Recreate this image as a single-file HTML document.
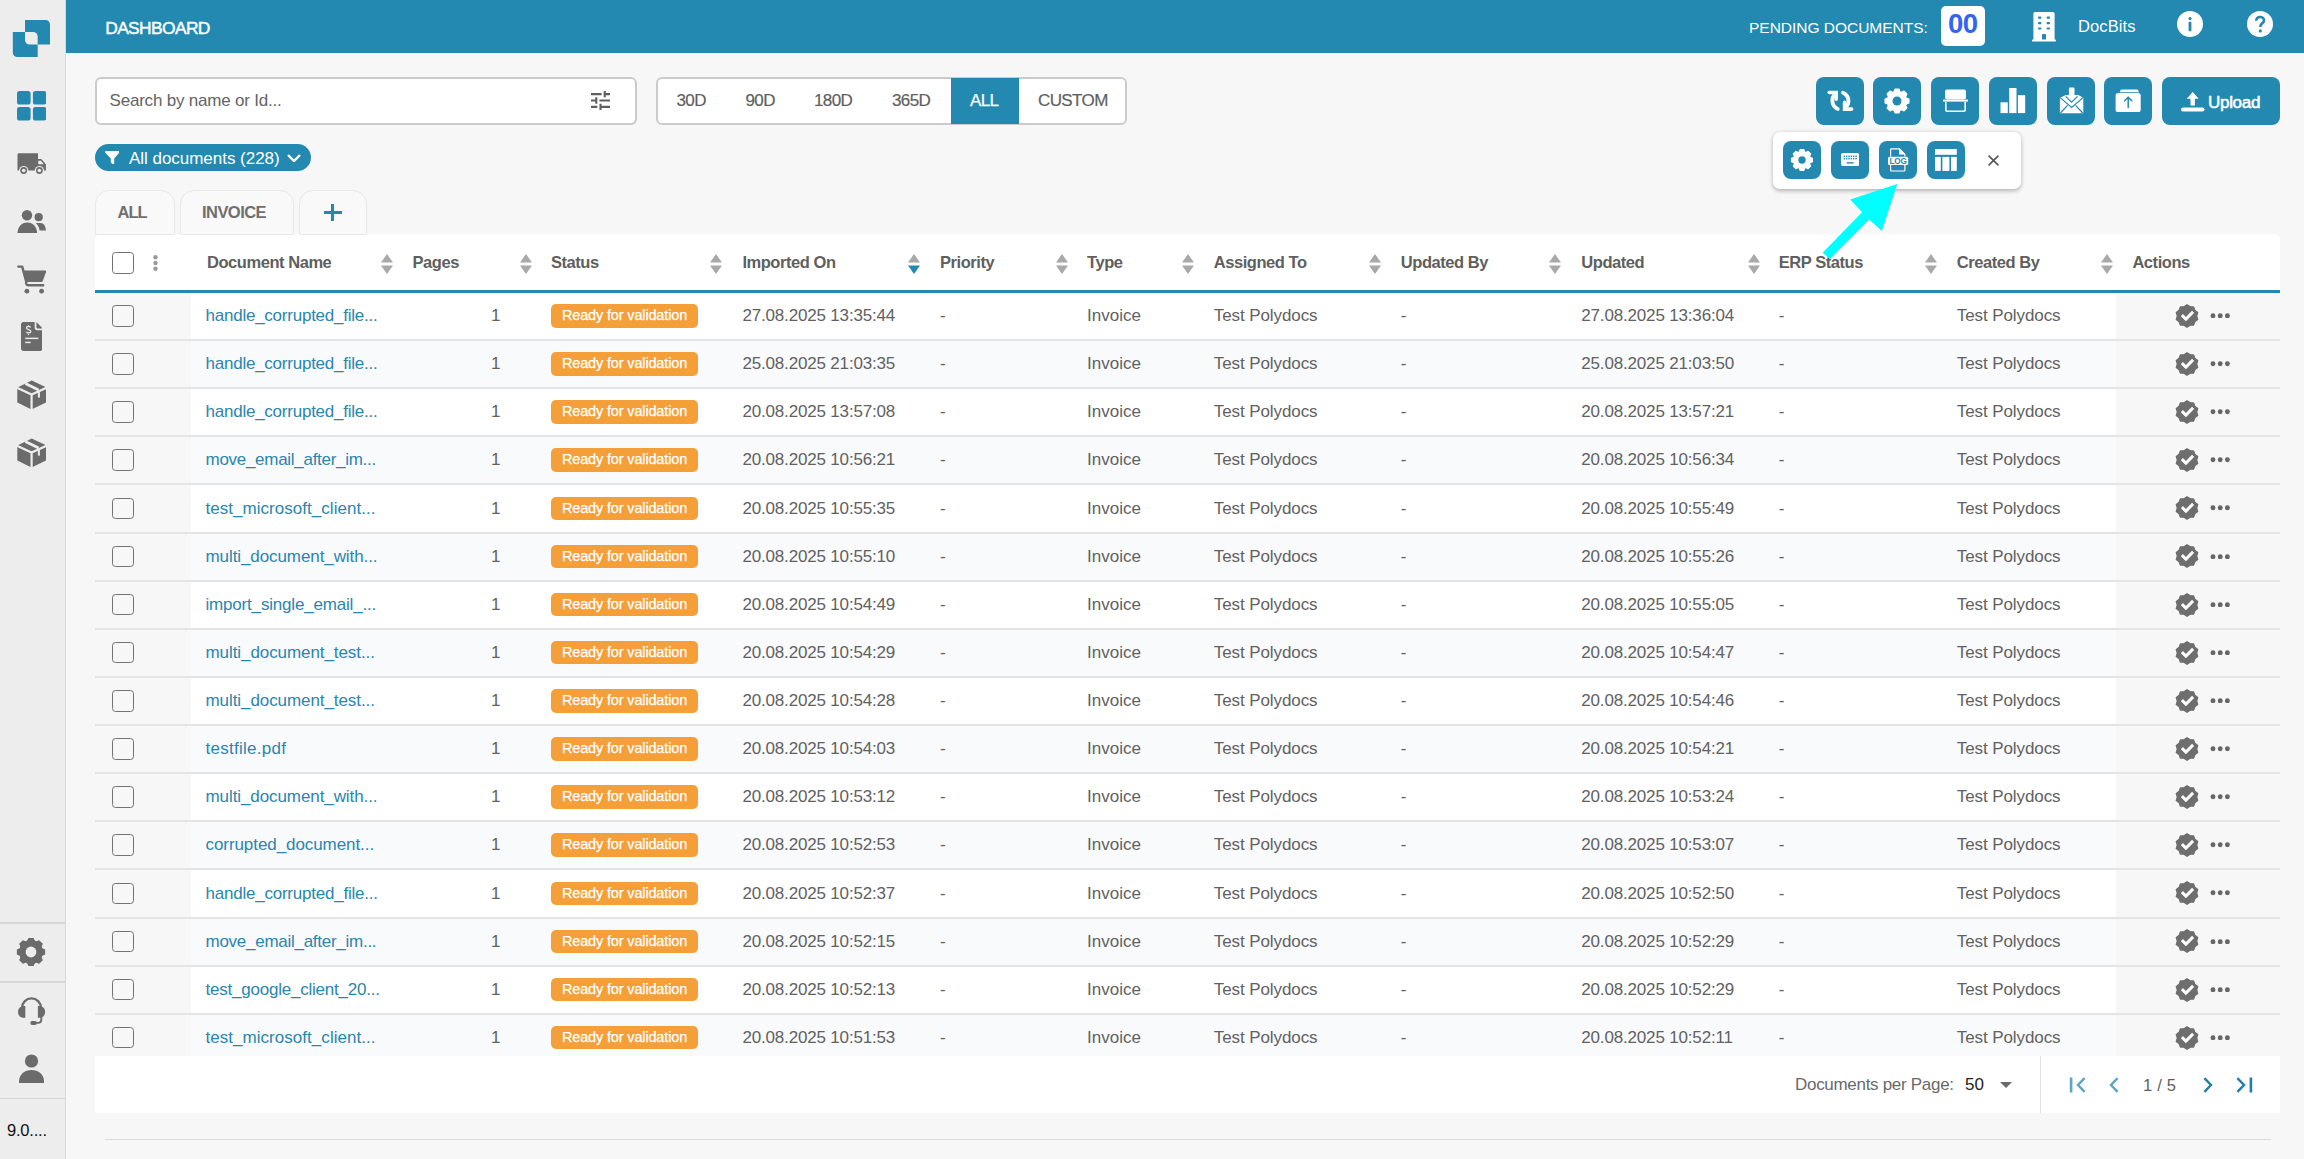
<!DOCTYPE html><html><head><meta charset="utf-8"><title>Dashboard</title><style>
*{box-sizing:border-box;margin:0;padding:0}
html,body{width:2304px;height:1159px;overflow:hidden}
body{position:relative;background:#f7f7f7;font-family:"Liberation Sans",sans-serif;color:#616161}
.a{position:absolute}
.t{position:absolute;white-space:nowrap;line-height:1}
#side{left:0;top:0;width:66px;height:1159px;background:#ededed;border-right:1px solid #d9d9d9}
#hdr{left:66px;top:0;width:2238px;height:52.5px;background:#2389b1}
.tb{position:absolute;top:77px;width:48px;height:48px;border-radius:8px;background:#2389b1}
.pb{position:absolute;top:141px;width:38px;height:38px;border-radius:8px;background:#2389b1}
.hd{font-size:16.5px;font-weight:700;color:#5f5f5f;letter-spacing:-0.45px}
.srt{position:absolute;width:12px;height:21px}
.row{position:absolute;left:95px;width:2185px;height:48.125px}
.dv{position:absolute;left:0;top:47px;width:2185px;height:2px;background:#e4e4e4;z-index:1}
.cell{position:absolute;white-space:nowrap;line-height:1;font-size:17px}
.lnk{color:#2a86ad;letter-spacing:-0.3px}
.badge{position:absolute;left:456px;width:147px;height:23.5px;border-radius:5px;background:#f59f38;color:#fff;font-size:14.5px;line-height:23.5px;text-align:center;letter-spacing:-0.15px;-webkit-text-stroke:0.25px #fff}
.cb{position:absolute;width:21.5px;height:21.5px;border:1.6px solid #727272;border-radius:3.5px;background:transparent}
</style></head><body>
<div id="side" class="a"></div>
<svg style="position:absolute;left:12px;top:20px;width:38px;height:37px" viewBox="12 20 38 37" fill="#2389b1" ><path fill="#2389b1" fill-rule="evenodd" d="M25 20h20.5a4.5 4.5 0 0 1 4.5 4.5V44.6H37.7V57H17.3a4.5 4.5 0 0 1-4.5-4.5V32H25z M25 32v8.1a4.5 4.5 0 0 0 4.5 4.5h8.2V36.5a4.5 4.5 0 0 0-4.5-4.5z"/></svg>
<svg style="position:absolute;left:16.7px;top:91px;width:29.5px;height:29.5px" viewBox="0 0 29.5 29.5" fill="#2389b1" ><rect x="0" y="0" width="13.6" height="13.6" rx="2.6"/><rect x="15.9" y="0" width="13.6" height="13.6" rx="2.6"/><rect x="0" y="15.9" width="13.6" height="13.6" rx="2.6"/><rect x="15.9" y="15.9" width="13.6" height="13.6" rx="2.6"/></svg>
<svg style="position:absolute;left:16.7px;top:153px;width:30px;height:23px" viewBox="0 0 30 23" fill="#6b6b6b" ><path d="M2 0.3H21V6H24.3L28.9 11.3V17.5H0.5V1.8C0.5 1 1.2 0.3 2 0.3z"/><path fill="#ededed" d="M21.3 7.7H24L26.7 11.2H21.3z"/><circle cx="6.7" cy="17.5" r="4.6" fill="#ededed"/><circle cx="6.7" cy="17.5" r="3.4"/><circle cx="6.7" cy="17.5" r="1.8" fill="#ededed"/><circle cx="22.4" cy="17.5" r="4.6" fill="#ededed"/><circle cx="22.4" cy="17.5" r="3.4"/><circle cx="22.4" cy="17.5" r="1.8" fill="#ededed"/></svg>
<svg style="position:absolute;left:16.7px;top:210px;width:30px;height:24px" viewBox="0 0 30 24" fill="#6b6b6b" ><circle cx="10" cy="5.3" r="5.2"/><path d="M0.5 23.1C0.5 17 4.5 12.4 10.3 12.4S20.1 17 20.1 23.1Z"/><circle cx="21.7" cy="7.2" r="4.1"/><path d="M18.8 13.1H23.5C26.8 13.1 28.9 16.5 28.9 20.6H22.6C22.2 17.5 20.8 14.8 18.8 13.1Z"/></svg>
<svg style="position:absolute;left:16.6px;top:265px;width:30px;height:30px" viewBox="0 0 30 30" fill="#6b6b6b" ><path fill="none" stroke="#6b6b6b" stroke-width="2.4" stroke-linecap="round" stroke-linejoin="round" d="M1.3 1.6H5.2L9.2 16.8C8.9 18.6 9.4 20.3 11.2 20.3H26.2"/><path d="M6.6 5.6H28.2C28.9 5.6 29.3 6.3 29.1 6.9L25.6 16.3C25.4 16.8 25 17.1 24.5 17.1H9.6Z"/><circle cx="9.9" cy="26.2" r="2.4"/><circle cx="24.6" cy="26.2" r="2.4"/></svg>
<svg style="position:absolute;left:20.8px;top:322.2px;width:21.6px;height:29px" viewBox="0 0 22.4 30" fill="#6b6b6b" ><path d="M2.6 0h11.6v6.2c0 1.2 1 2.2 2.2 2.2h6V27.4c0 1.4-1.2 2.6-2.6 2.6H2.6C1.2 30 0 28.8 0 27.4V2.6C0 1.2 1.2 0 2.6 0z"/><path d="M16 0l6.4 6.6H17a1 1 0 0 1-1-1z"/><path fill="none" stroke="#ededed" stroke-width="1.3" d="M7.8 3.4v1.2M7.8 12.3v1.2M10 5.6c-.4-.8-1.2-1.1-2.2-1.1-1.2 0-2.1.6-2.1 1.6 0 2.2 4.4 1.2 4.4 3.5 0 1-.9 1.7-2.2 1.7-1 0-1.9-.4-2.3-1.2"/><rect x="4.4" y="16.2" width="13.6" height="1.5" fill="#ededed"/><rect x="4.4" y="20.4" width="5.6" height="1.5" fill="#ededed"/></svg>
<svg style="position:absolute;left:16.6px;top:379.5px;width:29.4px;height:30px" viewBox="0 0 29.4 30" fill="#6b6b6b" ><path d="M14.7 0.4L29.2 7.4V22.4L14.5 29.6 0.3 22.4V7.4z"/><path fill="none" stroke="#ededed" stroke-width="2.2" d="M0 7.8L14.6 14.6L29.5 7.8M14.6 14.6V30.5"/><path fill="none" stroke="#ededed" stroke-width="2.8" d="M8.4 3.4L21.6 10.1"/><path fill="none" stroke="#ededed" stroke-width="2" d="M21.9 10.4V17.6"/></svg>
<svg style="position:absolute;left:16.6px;top:438px;width:29.4px;height:30px" viewBox="0 0 29.4 30" fill="#6b6b6b" ><path d="M14.7 0.4L29.2 7.4V22.4L14.5 29.6 0.3 22.4V7.4z"/><path fill="none" stroke="#ededed" stroke-width="2.2" d="M0 7.8L14.6 14.6L29.5 7.8M14.6 14.6V30.5"/><path fill="none" stroke="#ededed" stroke-width="2.8" d="M8.4 3.4L21.6 10.1"/><path fill="none" stroke="#ededed" stroke-width="2" d="M21.9 10.4V17.6"/></svg>
<div class="a" style="left:0;top:922px;width:65px;height:1.5px;background:#d6d6d6"></div>
<div class="a" style="left:0;top:981px;width:65px;height:1.5px;background:#d6d6d6"></div>
<div class="a" style="left:0;top:1097.5px;width:65px;height:1.5px;background:#d6d6d6"></div>
<svg style="position:absolute;left:15.3px;top:936px;width:32px;height:32px" viewBox="0 0 32 32"><circle cx="16.0" cy="16.0" r="11.700000000000001" fill="#6b6b6b"/><path d="M12.70 5.09 L13.80 2.48 L18.20 2.48 L19.30 5.09 L21.38 5.95 L24.01 4.88 L27.12 7.99 L26.05 10.62 L26.91 12.70 L29.52 13.80 L29.52 18.20 L26.91 19.30 L26.05 21.38 L27.12 24.01 L24.01 27.12 L21.38 26.05 L19.30 26.91 L18.20 29.52 L13.80 29.52 L12.70 26.91 L10.62 26.05 L7.99 27.12 L4.88 24.01 L5.95 21.38 L5.09 19.30 L2.48 18.20 L2.48 13.80 L5.09 12.70 L5.95 10.62 L4.88 7.99 L7.99 4.88 L10.62 5.95Z" fill="#6b6b6b" stroke="#6b6b6b" stroke-width="1.2" stroke-linejoin="round"/><circle cx="16.0" cy="16.0" r="5.4" fill="#ededed"/></svg>
<svg style="position:absolute;left:12px;top:990px;width:40px;height:40px" viewBox="0 0 40 40" fill="#6b6b6b" ><path fill="none" stroke="#6b6b6b" stroke-width="2.3" d="M10.1 20V17.8A9.4 9.4 0 0 1 28.9 17.8V20"/><path d="M13.3 16V27.8H11.6C8.4 27.8 6 25.2 6 21.9S8.4 16 11.6 16z"/><path d="M25.9 16V27.8H27.5C30.7 27.8 33.1 25.2 33.1 21.9S30.7 16 27.5 16z"/><path fill="none" stroke="#6b6b6b" stroke-width="1.9" d="M29.3 26V29.8C29.3 31.8 28.2 32.9 26.2 32.9H22"/><rect x="18.3" y="31" width="6.6" height="3.9" rx="1.9"/></svg>
<svg style="position:absolute;left:19px;top:1054px;width:25px;height:29px" viewBox="0 0 25 29" fill="#6b6b6b" ><circle cx="12.5" cy="7" r="6.6"/><path d="M0 27.5C0 20.3 5.6 16 12.5 16S25 20.3 25 27.5V29H0z"/></svg>
<div class="t" style="left:7px;top:1122px;font-size:16.5px;color:#111;letter-spacing:-0.2px">9.0....</div>
<div id="hdr" class="a"></div>
<div class="t" style="left:105.2px;top:20.1px;font-size:17.4px;font-weight:400;color:#fff;letter-spacing:-0.62px;-webkit-text-stroke:0.45px #fff">DASHBOARD</div>
<div class="t" style="left:1749px;top:20px;font-size:15.5px;color:#fff;letter-spacing:-0.02px">PENDING DOCUMENTS:</div>
<div class="a" style="left:1941px;top:6px;width:44px;height:40px;background:#fff;border-radius:5px"></div>
<div class="t" style="left:1948px;top:10.3px;font-size:27.5px;font-weight:700;color:#3163f5;letter-spacing:-0.6px">00</div>
<svg style="position:absolute;left:2032px;top:12px;width:24px;height:29.5px" viewBox="0 0 24 29.5" fill="#fff" ><path d="M3.2 0h17.6c1 0 1.8.8 1.8 1.8v25.6h.6c.5 0 .8.4.8.8v.5c0 .5-.4.8-.8.8H.8c-.5 0-.8-.3-.8-.8v-.5c0-.4.3-.8.8-.8h.6V1.8C1.4.8 2.2 0 3.2 0z"/><g fill="#2389b1"><rect x="6" y="4.6" width="3.4" height="2.2" rx=".8"/><rect x="14.6" y="4.6" width="3.4" height="2.2" rx=".8"/><rect x="6" y="10" width="3.4" height="2.2" rx=".8"/><rect x="14.6" y="10" width="3.4" height="2.2" rx=".8"/><rect x="6" y="15.4" width="3.4" height="2.2" rx=".8"/><rect x="14.6" y="15.4" width="3.4" height="2.2" rx=".8"/><path d="M10 27.4v-4.2c0-.7.5-1.2 1.2-1.2h1.6c.7 0 1.2.5 1.2 1.2v4.2z"/></g></svg>
<div class="t" style="left:2078px;top:18px;font-size:16.5px;color:#fff;letter-spacing:0.1px">DocBits</div>
<svg style="position:absolute;left:2177px;top:11.2px;width:26px;height:26px" viewBox="0 0 26 26" fill="#fff" ><circle cx="13" cy="13" r="13"/><g fill="#2389b1"><circle cx="13" cy="7.6" r="1.6"/><rect x="11.6" y="10.8" width="2.8" height="9.4" rx=".6"/></g></svg>
<svg style="position:absolute;left:2246.7px;top:11.2px;width:26px;height:26px" viewBox="0 0 26 26" fill="#fff" ><circle cx="13" cy="13" r="13"/><path fill="none" stroke="#2389b1" stroke-width="2.6" d="M9.2 9.8c0-2.3 1.7-3.8 3.9-3.8s3.9 1.5 3.9 3.6c0 2.8-3.6 2.8-3.6 5.7v.8"/><circle cx="13.3" cy="19.9" r="1.6" fill="#2389b1"/></svg>
<div class="a" style="left:95px;top:77px;width:541.5px;height:47.5px;background:#fff;border:2px solid #cbcbcb;border-radius:6px"></div>
<div class="t" style="left:109.5px;top:91.5px;font-size:17px;color:#646464;letter-spacing:-0.2px">Search by name or Id...</div>
<svg style="position:absolute;left:591px;top:91px;width:19px;height:19px" viewBox="3 3 18 18" fill="#5f5f5f" ><path d="M3 17v2h6v-2H3zM3 5v2h10V5H3zm10 16v-2h8v-2h-8v-2h-2v6h2zM7 9v2H3v2h4v2h2V9H7zm14 4v-2H11v2h10zm-6-4h2V7h4V5h-4V3h-2v6z"/></svg>
<div class="a" style="left:656px;top:77px;width:471px;height:47.5px;background:#fff;border:2px solid #cbcbcb;border-radius:6px;overflow:hidden"></div>
<div class="a" style="left:951px;top:78px;width:68px;height:46px;background:#2389b1"></div>
<div class="t" style="left:676.5px;top:92px;font-size:17px;color:#5f5f5f;letter-spacing:-0.6px;-webkit-text-stroke:0.2px #5f5f5f">30D</div>
<div class="t" style="left:745.5px;top:92px;font-size:17px;color:#5f5f5f;letter-spacing:-0.6px;-webkit-text-stroke:0.2px #5f5f5f">90D</div>
<div class="t" style="left:814px;top:92px;font-size:17px;color:#5f5f5f;letter-spacing:-0.6px;-webkit-text-stroke:0.2px #5f5f5f">180D</div>
<div class="t" style="left:892px;top:92px;font-size:17px;color:#5f5f5f;letter-spacing:-0.6px;-webkit-text-stroke:0.2px #5f5f5f">365D</div>
<div class="t" style="left:1038px;top:92px;font-size:17px;color:#5f5f5f;letter-spacing:-0.6px;-webkit-text-stroke:0.2px #5f5f5f">CUSTOM</div>
<div class="t" style="left:970px;top:92px;font-size:17px;color:#fff;letter-spacing:-0.6px;-webkit-text-stroke:0.25px #fff">ALL</div>
<div class="a" style="left:95px;top:144px;width:215.5px;height:27px;border-radius:14px;background:#2389b1"></div>
<svg style="position:absolute;left:104.6px;top:151.3px;width:14.6px;height:13.2px" viewBox="0 0 14.6 13.2" fill="#fff" ><path d="M.9 0h12.8c.8 0 1.2.9.7 1.5L9.2 7.4v4.9c0 .6-.7 1-1.2.7l-1.7-1.1c-.3-.2-.5-.5-.5-.8V7.4L.2 1.5C-.3.9.1 0 .9 0z"/></svg>
<div class="t" style="left:129px;top:149.5px;font-size:17px;color:#fff;letter-spacing:-0.03px">All documents (228)</div>
<svg style="position:absolute;left:287.4px;top:154px;width:14px;height:8.4px" viewBox="0 0 14 8.4" fill="#fff" ><path fill="none" stroke="#fff" stroke-width="2.4" d="M1 1l6 6 6-6"/></svg>
<div class="a" style="left:95px;top:190px;width:79.5px;height:45px;border-radius:14px 14px 0 0;background:#f9f9f9;border:1.5px solid #e8e8e8;z-index:3"></div>
<div class="a" style="left:179.5px;top:190px;width:114px;height:45px;border-radius:14px 14px 0 0;background:#f9f9f9;border:1.5px solid #e8e8e8;z-index:3"></div>
<div class="a" style="left:298.5px;top:190px;width:68.5px;height:45px;border-radius:14px 14px 0 0;background:#f9f9f9;border:1.5px solid #e8e8e8;z-index:3"></div>
<div class="t" style="left:117.5px;top:203.8px;font-size:16.5px;font-weight:700;color:#6f6f6f;letter-spacing:-1px;z-index:4">ALL</div>
<div class="t" style="left:202px;top:203.8px;font-size:16.5px;font-weight:700;color:#6f6f6f;letter-spacing:-0.55px;z-index:4">INVOICE</div>
<div class="a" style="left:323.5px;top:211px;width:18px;height:2.5px;background:#2389b1;z-index:4"></div>
<div class="a" style="left:331.3px;top:203.5px;width:2.5px;height:17.5px;background:#2389b1;z-index:4"></div>
<div class="tb" style="left:1815.5px"></div>
<div class="tb" style="left:1873px"></div>
<div class="tb" style="left:1931px"></div>
<div class="tb" style="left:1988.8px"></div>
<div class="tb" style="left:2046.6px"></div>
<div class="tb" style="left:2104.3px"></div>
<div class="tb" style="left:2162.3px;width:117.7px"></div>
<svg style="position:absolute;left:1815.5px;top:77px;width:48px;height:48px" viewBox="0 0 48 48"><path fill="none" stroke="#fff" stroke-width="3.8" stroke-linecap="round" d="M19.6 16.8A8.9 8.9 0 0 0 21.8 31.9"/><path fill="none" stroke="#fff" stroke-width="3.6" stroke-linecap="round" stroke-linejoin="miter" d="M13.2 15.5H20.2V22.3"/><g transform="rotate(180 24.4 23.8)"><path fill="none" stroke="#fff" stroke-width="3.8" stroke-linecap="round" d="M19.6 16.8A8.9 8.9 0 0 0 21.8 31.9"/><path fill="none" stroke="#fff" stroke-width="3.6" stroke-linecap="round" stroke-linejoin="miter" d="M13.2 15.5H20.2V22.3"/></g></svg>
<svg style="position:absolute;left:1883.3px;top:86.7px;width:28px;height:28px" viewBox="0 0 28 28"><circle cx="14.0" cy="14.0" r="10.0" fill="#fff"/><path d="M11.10 4.74 L12.00 2.07 L16.00 2.07 L16.90 4.74 L18.49 5.40 L21.02 4.15 L23.85 6.98 L22.60 9.51 L23.26 11.10 L25.93 12.00 L25.93 16.00 L23.26 16.90 L22.60 18.49 L23.85 21.02 L21.02 23.85 L18.49 22.60 L16.90 23.26 L16.00 25.93 L12.00 25.93 L11.10 23.26 L9.51 22.60 L6.98 23.85 L4.15 21.02 L5.40 18.49 L4.74 16.90 L2.07 16.00 L2.07 12.00 L4.74 11.10 L5.40 9.51 L4.15 6.98 L6.98 4.15 L9.51 5.40Z" fill="#fff" stroke="#fff" stroke-width="1.2" stroke-linejoin="round"/><circle cx="14.0" cy="14.0" r="4.5" fill="#2389b1"/></svg>
<svg style="position:absolute;left:1943px;top:89px;width:25px;height:24px" viewBox="0 0 25 24" fill="#fff" ><rect x="2" y="0.5" width="21" height="10" rx="2"/><rect x="0" y="10.6" width="25" height="2"/><path fill="none" stroke="#fff" stroke-width="1.6" d="M2.8 13v7.6c0 1.1.6 1.7 1.7 1.7h16c1.1 0 1.7-.6 1.7-1.7V13"/></svg>
<svg style="position:absolute;left:2000px;top:88px;width:26px;height:26px" viewBox="0 0 26 26" fill="#fff" ><rect x="0.5" y="14.3" width="7.3" height="10.8"/><rect x="9.2" y="0" width="7.3" height="25.1"/><rect x="17.9" y="7.2" width="7.3" height="17.9"/></svg>
<svg style="position:absolute;left:2046.6px;top:77px;width:48px;height:48px" viewBox="0 0 48 48"><path fill="#fff" d="M12.9 20.7L18.9 18.0H21.9V11.6c0-.6.5-1.1 1.1-1.1h3.4c.6 0 1.1.5 1.1 1.1V18.0H31.3L36.3 20.7V36.3H12.9z"/><path fill="none" stroke="#2389b1" stroke-width="1.2" d="M13.2 20.6L24.6 30.4L36 20.6M13.4 36L20.6 28.4M35.8 36L28.6 28.4M18.6 19.4L24.6 25.2L30.6 19.4"/></svg>
<svg style="position:absolute;left:2104.3px;top:77px;width:48px;height:48px" viewBox="0 0 48 48"><path fill="#fff" d="M15.6 15.3L16.6 13.1c.2-.4.6-.6 1-.6h15.4c.4 0 .8.2 1 .6l1 2.2z"/><rect x="11.6" y="15.9" width="25.1" height="19.1" rx="2.6" fill="#fff"/><path fill="none" stroke="#2389b1" stroke-width="1.5" stroke-linecap="round" d="M24.2 30.6V20.4M20.6 23.8l3.6-3.6 3.6 3.6"/></svg>
<svg style="position:absolute;left:2181px;top:92px;width:23.5px;height:20px" viewBox="0 0 23.5 20" fill="#fff" ><path d="M11.7 0l6 6.8h-3.8v6.6H9.5V6.8H5.7z"/><rect x="0" y="15.6" width="23.5" height="4" rx="2"/></svg>
<div class="t" style="left:2208px;top:94.3px;font-size:17px;font-weight:400;color:#fff;letter-spacing:-0.3px;-webkit-text-stroke:0.55px #fff">Upload</div>
<div class="a" style="left:1773px;top:131.5px;width:248px;height:57px;background:#fff;border-radius:7px;box-shadow:0 1.5px 4px rgba(0,0,0,0.28)"></div>
<div class="pb" style="left:1783px"></div>
<div class="pb" style="left:1831.2px"></div>
<div class="pb" style="left:1879.1px"></div>
<div class="pb" style="left:1927.2px"></div>
<svg style="position:absolute;left:1789.9px;top:147.9px;width:24px;height:24px" viewBox="0 0 24 24"><circle cx="12.0" cy="12.0" r="8.8" fill="#fff"/><path d="M9.40 3.91 L10.20 1.55 L13.80 1.55 L14.60 3.91 L15.88 4.44 L18.11 3.34 L20.66 5.89 L19.56 8.12 L20.09 9.40 L22.45 10.20 L22.45 13.80 L20.09 14.60 L19.56 15.88 L20.66 18.11 L18.11 20.66 L15.88 19.56 L14.60 20.09 L13.80 22.45 L10.20 22.45 L9.40 20.09 L8.12 19.56 L5.89 20.66 L3.34 18.11 L4.44 15.88 L3.91 14.60 L1.55 13.80 L1.55 10.20 L3.91 9.40 L4.44 8.12 L3.34 5.89 L5.89 3.34 L8.12 4.44Z" fill="#fff" stroke="#fff" stroke-width="1.2" stroke-linejoin="round"/><circle cx="12.0" cy="12.0" r="3.7" fill="#2389b1"/></svg>
<svg style="position:absolute;left:1841px;top:153.3px;width:18.2px;height:13.1px" viewBox="0 0 18.2 13.1" fill="#fff" ><rect x="0" y="0" width="18.2" height="13.1" rx="2"/><g fill="#2389b1"><rect x="2.60" y="2.60" width="1.4" height="1.4"/><rect x="2.60" y="5.00" width="1.4" height="1.4"/><rect x="4.95" y="2.60" width="1.4" height="1.4"/><rect x="4.95" y="5.00" width="1.4" height="1.4"/><rect x="7.30" y="2.60" width="1.4" height="1.4"/><rect x="7.30" y="5.00" width="1.4" height="1.4"/><rect x="9.65" y="2.60" width="1.4" height="1.4"/><rect x="9.65" y="5.00" width="1.4" height="1.4"/><rect x="12.00" y="2.60" width="1.4" height="1.4"/><rect x="12.00" y="5.00" width="1.4" height="1.4"/><rect x="14.35" y="2.60" width="1.4" height="1.4"/><rect x="14.35" y="5.00" width="1.4" height="1.4"/><rect x="5.6" y="9.2" width="7" height="1.4"/></g></svg>
<svg style="position:absolute;left:1879.1px;top:141.2px;width:38px;height:38px" viewBox="0 0 38 38"><path fill="none" stroke="#fff" stroke-width="1.2" d="M11.6 15.6V8.6c0-.4.3-.7.7-.7h8.2l5.4 5.6v2.1M11.6 24V29.3c0 .4.3.7.7.7h12.9c.4 0 .7-.3.7-.7V24"/><path fill="#fff" d="M20.2 7.9V13.6h5.9z"/><rect x="9" y="15.8" width="20.2" height="8.2" rx="1.6" fill="#fff"/><text x="19.1" y="22.9" text-anchor="middle" font-family="Liberation Sans" font-weight="700" font-size="8.2" fill="#2389b1" letter-spacing="-0.2">LOG</text></svg>
<svg style="position:absolute;left:1935.4px;top:149.1px;width:21.8px;height:21.9px" viewBox="0 0 21.8 21.9" fill="#fff" ><rect x="0" y="0" width="21.8" height="5.8"/><rect x="0" y="7.9" width="5.8" height="14"/><rect x="7.4" y="7.9" width="7" height="14"/><rect x="16" y="7.9" width="5.8" height="14"/></svg>
<svg style="position:absolute;left:1988px;top:154.5px;width:11px;height:11px" viewBox="0 0 11 11" fill="#fff" ><path fill="none" stroke="#555" stroke-width="1.5" d="M.6.6l9.8 9.8M10.4.6L.6 10.4"/></svg>
<div class="a" style="left:95px;top:234px;width:2185px;height:821.5px;background:#fff;border-radius:6px 6px 0 0;overflow:hidden" id="tbl">
<div class="a" style="left:0;top:56px;width:2185px;height:2.6px;background:#2389b1;z-index:2"></div>
<div class="cb" style="left:17px;top:18px"></div>
<svg style="position:absolute;left:57.5px;top:20.5px;width:5px;height:16px" viewBox="0 0 5 16" fill="#9a9a9a"><circle cx="2.5" cy="2.3" r="2.2"/><circle cx="2.5" cy="8" r="2.2"/><circle cx="2.5" cy="13.7" r="2.2"/></svg>
<div class="t hd" style="left:112.0px;top:19.5px">Document Name</div>
<div class="t hd" style="left:317.5px;top:19.5px">Pages</div>
<div class="t hd" style="left:456.0px;top:19.5px">Status</div>
<div class="t hd" style="left:647.4px;top:19.5px">Imported On</div>
<div class="t hd" style="left:845.0px;top:19.5px">Priority</div>
<div class="t hd" style="left:992.0px;top:19.5px">Type</div>
<div class="t hd" style="left:1118.8px;top:19.5px">Assigned To</div>
<div class="t hd" style="left:1305.8px;top:19.5px">Updated By</div>
<div class="t hd" style="left:1486.3px;top:19.5px">Updated</div>
<div class="t hd" style="left:1683.8px;top:19.5px">ERP Status</div>
<div class="t hd" style="left:1861.8px;top:19.5px">Created By</div>
<div class="t hd" style="left:2037.4px;top:19.5px">Actions</div>
<svg class="srt" style="left:286.0px;top:20px" viewBox="0 0 12 21"><path d="M6 0L12 8.4H0z" fill="#a8a8a8"/><path d="M0 11.5H12L6 20z" fill="#a8a8a8"/></svg>
<svg class="srt" style="left:425.0px;top:20px" viewBox="0 0 12 21"><path d="M6 0L12 8.4H0z" fill="#a8a8a8"/><path d="M0 11.5H12L6 20z" fill="#a8a8a8"/></svg>
<svg class="srt" style="left:615.0px;top:20px" viewBox="0 0 12 21"><path d="M6 0L12 8.4H0z" fill="#a8a8a8"/><path d="M0 11.5H12L6 20z" fill="#a8a8a8"/></svg>
<svg class="srt" style="left:813.0px;top:20px" viewBox="0 0 12 21"><path d="M6 0L12 8.4H0z" fill="#a8a8a8"/><path d="M0 11.5H12L6 20z" fill="#2389b1"/></svg>
<svg class="srt" style="left:961.0px;top:20px" viewBox="0 0 12 21"><path d="M6 0L12 8.4H0z" fill="#a8a8a8"/><path d="M0 11.5H12L6 20z" fill="#a8a8a8"/></svg>
<svg class="srt" style="left:1087.0px;top:20px" viewBox="0 0 12 21"><path d="M6 0L12 8.4H0z" fill="#a8a8a8"/><path d="M0 11.5H12L6 20z" fill="#a8a8a8"/></svg>
<svg class="srt" style="left:1274.0px;top:20px" viewBox="0 0 12 21"><path d="M6 0L12 8.4H0z" fill="#a8a8a8"/><path d="M0 11.5H12L6 20z" fill="#a8a8a8"/></svg>
<svg class="srt" style="left:1454.0px;top:20px" viewBox="0 0 12 21"><path d="M6 0L12 8.4H0z" fill="#a8a8a8"/><path d="M0 11.5H12L6 20z" fill="#a8a8a8"/></svg>
<svg class="srt" style="left:1652.5px;top:20px" viewBox="0 0 12 21"><path d="M6 0L12 8.4H0z" fill="#a8a8a8"/><path d="M0 11.5H12L6 20z" fill="#a8a8a8"/></svg>
<svg class="srt" style="left:1830.0px;top:20px" viewBox="0 0 12 21"><path d="M6 0L12 8.4H0z" fill="#a8a8a8"/><path d="M0 11.5H12L6 20z" fill="#a8a8a8"/></svg>
<svg class="srt" style="left:2006.0px;top:20px" viewBox="0 0 12 21"><path d="M6 0L12 8.4H0z" fill="#a8a8a8"/><path d="M0 11.5H12L6 20z" fill="#a8a8a8"/></svg>
<div class="row" style="left:0;top:58.100px;background:#ffffff">
<div class="a" style="left:0;top:0;width:95.5px;height:48.125px;background:#f7f7f7"></div>
<div class="a" style="left:2021px;top:0;width:164px;height:48.125px;background:#f7f7f7"></div>
<div class="dv"></div>
<div class="cb" style="left:17px;top:13px"></div>
<div class="cell lnk" style="left:110.5px;top:15px;letter-spacing:-0.235px">handle_corrupted_file...</div>
<div class="cell" style="left:396px;top:15px">1</div>
<div class="badge" style="top:12px">Ready for validation</div>
<div class="cell" style="left:647.4px;top:15px;letter-spacing:-0.17px">27.08.2025 13:35:44</div>
<div class="cell" style="left:845px;top:15px">-</div>
<div class="cell" style="left:992px;top:15px">Invoice</div>
<div class="cell" style="left:1118.8px;top:15px;letter-spacing:-0.09px">Test Polydocs</div>
<div class="cell" style="left:1305.8px;top:15px">-</div>
<div class="cell" style="left:1486.3px;top:15px;letter-spacing:-0.17px">27.08.2025 13:36:04</div>
<div class="cell" style="left:1683.8px;top:15px">-</div>
<div class="cell" style="left:1861.8px;top:15px;letter-spacing:-0.09px">Test Polydocs</div>
<svg style="position:absolute;left:2078.1px;top:9.70px;width:28px;height:28px" viewBox="0 0 28 28"><path d="M14.00 2.80 L16.97 4.87 L20.58 4.94 L21.77 8.36 L24.65 10.54 L23.60 14.00 L24.65 17.46 L21.77 19.64 L20.58 23.06 L16.97 23.13 L14.00 25.20 L11.03 23.13 L7.42 23.06 L6.23 19.64 L3.35 17.46 L4.40 14.00 L3.35 10.54 L6.23 8.36 L7.42 4.94 L11.03 4.87Z" fill="#6e6e6e" stroke="#6e6e6e" stroke-width="1.4" stroke-linejoin="round"/><path d="M8.9 13.1L12.9 17.1L20.1 9.9" fill="none" stroke="#fff" stroke-width="2.9"/></svg>
<svg style="position:absolute;left:2114.5px;top:20.8px;width:20px;height:5.5px" viewBox="0 0 20 5.5" fill="#666"><circle cx="3" cy="2.75" r="2.45"/><circle cx="10.2" cy="2.75" r="2.45"/><circle cx="17.4" cy="2.75" r="2.45"/></svg>
</div>
<div class="row" style="left:0;top:106.225px;background:#f9fafc">
<div class="a" style="left:0;top:0;width:95.5px;height:48.125px;background:#f7f7f7"></div>
<div class="a" style="left:2021px;top:0;width:164px;height:48.125px;background:#f7f7f7"></div>
<div class="dv"></div>
<div class="cb" style="left:17px;top:13px"></div>
<div class="cell lnk" style="left:110.5px;top:15px;letter-spacing:-0.235px">handle_corrupted_file...</div>
<div class="cell" style="left:396px;top:15px">1</div>
<div class="badge" style="top:12px">Ready for validation</div>
<div class="cell" style="left:647.4px;top:15px;letter-spacing:-0.17px">25.08.2025 21:03:35</div>
<div class="cell" style="left:845px;top:15px">-</div>
<div class="cell" style="left:992px;top:15px">Invoice</div>
<div class="cell" style="left:1118.8px;top:15px;letter-spacing:-0.09px">Test Polydocs</div>
<div class="cell" style="left:1305.8px;top:15px">-</div>
<div class="cell" style="left:1486.3px;top:15px;letter-spacing:-0.17px">25.08.2025 21:03:50</div>
<div class="cell" style="left:1683.8px;top:15px">-</div>
<div class="cell" style="left:1861.8px;top:15px;letter-spacing:-0.09px">Test Polydocs</div>
<svg style="position:absolute;left:2078.1px;top:9.70px;width:28px;height:28px" viewBox="0 0 28 28"><path d="M14.00 2.80 L16.97 4.87 L20.58 4.94 L21.77 8.36 L24.65 10.54 L23.60 14.00 L24.65 17.46 L21.77 19.64 L20.58 23.06 L16.97 23.13 L14.00 25.20 L11.03 23.13 L7.42 23.06 L6.23 19.64 L3.35 17.46 L4.40 14.00 L3.35 10.54 L6.23 8.36 L7.42 4.94 L11.03 4.87Z" fill="#6e6e6e" stroke="#6e6e6e" stroke-width="1.4" stroke-linejoin="round"/><path d="M8.9 13.1L12.9 17.1L20.1 9.9" fill="none" stroke="#fff" stroke-width="2.9"/></svg>
<svg style="position:absolute;left:2114.5px;top:20.8px;width:20px;height:5.5px" viewBox="0 0 20 5.5" fill="#666"><circle cx="3" cy="2.75" r="2.45"/><circle cx="10.2" cy="2.75" r="2.45"/><circle cx="17.4" cy="2.75" r="2.45"/></svg>
</div>
<div class="row" style="left:0;top:154.350px;background:#ffffff">
<div class="a" style="left:0;top:0;width:95.5px;height:48.125px;background:#f7f7f7"></div>
<div class="a" style="left:2021px;top:0;width:164px;height:48.125px;background:#f7f7f7"></div>
<div class="dv"></div>
<div class="cb" style="left:17px;top:13px"></div>
<div class="cell lnk" style="left:110.5px;top:15px;letter-spacing:-0.235px">handle_corrupted_file...</div>
<div class="cell" style="left:396px;top:15px">1</div>
<div class="badge" style="top:12px">Ready for validation</div>
<div class="cell" style="left:647.4px;top:15px;letter-spacing:-0.17px">20.08.2025 13:57:08</div>
<div class="cell" style="left:845px;top:15px">-</div>
<div class="cell" style="left:992px;top:15px">Invoice</div>
<div class="cell" style="left:1118.8px;top:15px;letter-spacing:-0.09px">Test Polydocs</div>
<div class="cell" style="left:1305.8px;top:15px">-</div>
<div class="cell" style="left:1486.3px;top:15px;letter-spacing:-0.17px">20.08.2025 13:57:21</div>
<div class="cell" style="left:1683.8px;top:15px">-</div>
<div class="cell" style="left:1861.8px;top:15px;letter-spacing:-0.09px">Test Polydocs</div>
<svg style="position:absolute;left:2078.1px;top:9.70px;width:28px;height:28px" viewBox="0 0 28 28"><path d="M14.00 2.80 L16.97 4.87 L20.58 4.94 L21.77 8.36 L24.65 10.54 L23.60 14.00 L24.65 17.46 L21.77 19.64 L20.58 23.06 L16.97 23.13 L14.00 25.20 L11.03 23.13 L7.42 23.06 L6.23 19.64 L3.35 17.46 L4.40 14.00 L3.35 10.54 L6.23 8.36 L7.42 4.94 L11.03 4.87Z" fill="#6e6e6e" stroke="#6e6e6e" stroke-width="1.4" stroke-linejoin="round"/><path d="M8.9 13.1L12.9 17.1L20.1 9.9" fill="none" stroke="#fff" stroke-width="2.9"/></svg>
<svg style="position:absolute;left:2114.5px;top:20.8px;width:20px;height:5.5px" viewBox="0 0 20 5.5" fill="#666"><circle cx="3" cy="2.75" r="2.45"/><circle cx="10.2" cy="2.75" r="2.45"/><circle cx="17.4" cy="2.75" r="2.45"/></svg>
</div>
<div class="row" style="left:0;top:202.475px;background:#f9fafc">
<div class="a" style="left:0;top:0;width:95.5px;height:48.125px;background:#f7f7f7"></div>
<div class="a" style="left:2021px;top:0;width:164px;height:48.125px;background:#f7f7f7"></div>
<div class="dv"></div>
<div class="cb" style="left:17px;top:13px"></div>
<div class="cell lnk" style="left:110.5px;top:15px;letter-spacing:-0.286px">move_email_after_im...</div>
<div class="cell" style="left:396px;top:15px">1</div>
<div class="badge" style="top:12px">Ready for validation</div>
<div class="cell" style="left:647.4px;top:15px;letter-spacing:-0.17px">20.08.2025 10:56:21</div>
<div class="cell" style="left:845px;top:15px">-</div>
<div class="cell" style="left:992px;top:15px">Invoice</div>
<div class="cell" style="left:1118.8px;top:15px;letter-spacing:-0.09px">Test Polydocs</div>
<div class="cell" style="left:1305.8px;top:15px">-</div>
<div class="cell" style="left:1486.3px;top:15px;letter-spacing:-0.17px">20.08.2025 10:56:34</div>
<div class="cell" style="left:1683.8px;top:15px">-</div>
<div class="cell" style="left:1861.8px;top:15px;letter-spacing:-0.09px">Test Polydocs</div>
<svg style="position:absolute;left:2078.1px;top:9.70px;width:28px;height:28px" viewBox="0 0 28 28"><path d="M14.00 2.80 L16.97 4.87 L20.58 4.94 L21.77 8.36 L24.65 10.54 L23.60 14.00 L24.65 17.46 L21.77 19.64 L20.58 23.06 L16.97 23.13 L14.00 25.20 L11.03 23.13 L7.42 23.06 L6.23 19.64 L3.35 17.46 L4.40 14.00 L3.35 10.54 L6.23 8.36 L7.42 4.94 L11.03 4.87Z" fill="#6e6e6e" stroke="#6e6e6e" stroke-width="1.4" stroke-linejoin="round"/><path d="M8.9 13.1L12.9 17.1L20.1 9.9" fill="none" stroke="#fff" stroke-width="2.9"/></svg>
<svg style="position:absolute;left:2114.5px;top:20.8px;width:20px;height:5.5px" viewBox="0 0 20 5.5" fill="#666"><circle cx="3" cy="2.75" r="2.45"/><circle cx="10.2" cy="2.75" r="2.45"/><circle cx="17.4" cy="2.75" r="2.45"/></svg>
</div>
<div class="row" style="left:0;top:250.600px;background:#ffffff">
<div class="a" style="left:0;top:0;width:95.5px;height:48.125px;background:#f7f7f7"></div>
<div class="a" style="left:2021px;top:0;width:164px;height:48.125px;background:#f7f7f7"></div>
<div class="dv"></div>
<div class="cb" style="left:17px;top:13px"></div>
<div class="cell lnk" style="left:110.5px;top:15px;letter-spacing:0.035px">test_microsoft_client...</div>
<div class="cell" style="left:396px;top:15px">1</div>
<div class="badge" style="top:12px">Ready for validation</div>
<div class="cell" style="left:647.4px;top:15px;letter-spacing:-0.17px">20.08.2025 10:55:35</div>
<div class="cell" style="left:845px;top:15px">-</div>
<div class="cell" style="left:992px;top:15px">Invoice</div>
<div class="cell" style="left:1118.8px;top:15px;letter-spacing:-0.09px">Test Polydocs</div>
<div class="cell" style="left:1305.8px;top:15px">-</div>
<div class="cell" style="left:1486.3px;top:15px;letter-spacing:-0.17px">20.08.2025 10:55:49</div>
<div class="cell" style="left:1683.8px;top:15px">-</div>
<div class="cell" style="left:1861.8px;top:15px;letter-spacing:-0.09px">Test Polydocs</div>
<svg style="position:absolute;left:2078.1px;top:9.70px;width:28px;height:28px" viewBox="0 0 28 28"><path d="M14.00 2.80 L16.97 4.87 L20.58 4.94 L21.77 8.36 L24.65 10.54 L23.60 14.00 L24.65 17.46 L21.77 19.64 L20.58 23.06 L16.97 23.13 L14.00 25.20 L11.03 23.13 L7.42 23.06 L6.23 19.64 L3.35 17.46 L4.40 14.00 L3.35 10.54 L6.23 8.36 L7.42 4.94 L11.03 4.87Z" fill="#6e6e6e" stroke="#6e6e6e" stroke-width="1.4" stroke-linejoin="round"/><path d="M8.9 13.1L12.9 17.1L20.1 9.9" fill="none" stroke="#fff" stroke-width="2.9"/></svg>
<svg style="position:absolute;left:2114.5px;top:20.8px;width:20px;height:5.5px" viewBox="0 0 20 5.5" fill="#666"><circle cx="3" cy="2.75" r="2.45"/><circle cx="10.2" cy="2.75" r="2.45"/><circle cx="17.4" cy="2.75" r="2.45"/></svg>
</div>
<div class="row" style="left:0;top:298.725px;background:#f9fafc">
<div class="a" style="left:0;top:0;width:95.5px;height:48.125px;background:#f7f7f7"></div>
<div class="a" style="left:2021px;top:0;width:164px;height:48.125px;background:#f7f7f7"></div>
<div class="dv"></div>
<div class="cb" style="left:17px;top:13px"></div>
<div class="cell lnk" style="left:110.5px;top:15px;letter-spacing:-0.086px">multi_document_with...</div>
<div class="cell" style="left:396px;top:15px">1</div>
<div class="badge" style="top:12px">Ready for validation</div>
<div class="cell" style="left:647.4px;top:15px;letter-spacing:-0.17px">20.08.2025 10:55:10</div>
<div class="cell" style="left:845px;top:15px">-</div>
<div class="cell" style="left:992px;top:15px">Invoice</div>
<div class="cell" style="left:1118.8px;top:15px;letter-spacing:-0.09px">Test Polydocs</div>
<div class="cell" style="left:1305.8px;top:15px">-</div>
<div class="cell" style="left:1486.3px;top:15px;letter-spacing:-0.17px">20.08.2025 10:55:26</div>
<div class="cell" style="left:1683.8px;top:15px">-</div>
<div class="cell" style="left:1861.8px;top:15px;letter-spacing:-0.09px">Test Polydocs</div>
<svg style="position:absolute;left:2078.1px;top:9.70px;width:28px;height:28px" viewBox="0 0 28 28"><path d="M14.00 2.80 L16.97 4.87 L20.58 4.94 L21.77 8.36 L24.65 10.54 L23.60 14.00 L24.65 17.46 L21.77 19.64 L20.58 23.06 L16.97 23.13 L14.00 25.20 L11.03 23.13 L7.42 23.06 L6.23 19.64 L3.35 17.46 L4.40 14.00 L3.35 10.54 L6.23 8.36 L7.42 4.94 L11.03 4.87Z" fill="#6e6e6e" stroke="#6e6e6e" stroke-width="1.4" stroke-linejoin="round"/><path d="M8.9 13.1L12.9 17.1L20.1 9.9" fill="none" stroke="#fff" stroke-width="2.9"/></svg>
<svg style="position:absolute;left:2114.5px;top:20.8px;width:20px;height:5.5px" viewBox="0 0 20 5.5" fill="#666"><circle cx="3" cy="2.75" r="2.45"/><circle cx="10.2" cy="2.75" r="2.45"/><circle cx="17.4" cy="2.75" r="2.45"/></svg>
</div>
<div class="row" style="left:0;top:346.850px;background:#ffffff">
<div class="a" style="left:0;top:0;width:95.5px;height:48.125px;background:#f7f7f7"></div>
<div class="a" style="left:2021px;top:0;width:164px;height:48.125px;background:#f7f7f7"></div>
<div class="dv"></div>
<div class="cb" style="left:17px;top:13px"></div>
<div class="cell lnk" style="left:110.5px;top:15px;letter-spacing:-0.186px">import_single_email_...</div>
<div class="cell" style="left:396px;top:15px">1</div>
<div class="badge" style="top:12px">Ready for validation</div>
<div class="cell" style="left:647.4px;top:15px;letter-spacing:-0.17px">20.08.2025 10:54:49</div>
<div class="cell" style="left:845px;top:15px">-</div>
<div class="cell" style="left:992px;top:15px">Invoice</div>
<div class="cell" style="left:1118.8px;top:15px;letter-spacing:-0.09px">Test Polydocs</div>
<div class="cell" style="left:1305.8px;top:15px">-</div>
<div class="cell" style="left:1486.3px;top:15px;letter-spacing:-0.17px">20.08.2025 10:55:05</div>
<div class="cell" style="left:1683.8px;top:15px">-</div>
<div class="cell" style="left:1861.8px;top:15px;letter-spacing:-0.09px">Test Polydocs</div>
<svg style="position:absolute;left:2078.1px;top:9.70px;width:28px;height:28px" viewBox="0 0 28 28"><path d="M14.00 2.80 L16.97 4.87 L20.58 4.94 L21.77 8.36 L24.65 10.54 L23.60 14.00 L24.65 17.46 L21.77 19.64 L20.58 23.06 L16.97 23.13 L14.00 25.20 L11.03 23.13 L7.42 23.06 L6.23 19.64 L3.35 17.46 L4.40 14.00 L3.35 10.54 L6.23 8.36 L7.42 4.94 L11.03 4.87Z" fill="#6e6e6e" stroke="#6e6e6e" stroke-width="1.4" stroke-linejoin="round"/><path d="M8.9 13.1L12.9 17.1L20.1 9.9" fill="none" stroke="#fff" stroke-width="2.9"/></svg>
<svg style="position:absolute;left:2114.5px;top:20.8px;width:20px;height:5.5px" viewBox="0 0 20 5.5" fill="#666"><circle cx="3" cy="2.75" r="2.45"/><circle cx="10.2" cy="2.75" r="2.45"/><circle cx="17.4" cy="2.75" r="2.45"/></svg>
</div>
<div class="row" style="left:0;top:394.975px;background:#f9fafc">
<div class="a" style="left:0;top:0;width:95.5px;height:48.125px;background:#f7f7f7"></div>
<div class="a" style="left:2021px;top:0;width:164px;height:48.125px;background:#f7f7f7"></div>
<div class="dv"></div>
<div class="cb" style="left:17px;top:13px"></div>
<div class="cell lnk" style="left:110.5px;top:15px;letter-spacing:-0.076px">multi_document_test...</div>
<div class="cell" style="left:396px;top:15px">1</div>
<div class="badge" style="top:12px">Ready for validation</div>
<div class="cell" style="left:647.4px;top:15px;letter-spacing:-0.17px">20.08.2025 10:54:29</div>
<div class="cell" style="left:845px;top:15px">-</div>
<div class="cell" style="left:992px;top:15px">Invoice</div>
<div class="cell" style="left:1118.8px;top:15px;letter-spacing:-0.09px">Test Polydocs</div>
<div class="cell" style="left:1305.8px;top:15px">-</div>
<div class="cell" style="left:1486.3px;top:15px;letter-spacing:-0.17px">20.08.2025 10:54:47</div>
<div class="cell" style="left:1683.8px;top:15px">-</div>
<div class="cell" style="left:1861.8px;top:15px;letter-spacing:-0.09px">Test Polydocs</div>
<svg style="position:absolute;left:2078.1px;top:9.70px;width:28px;height:28px" viewBox="0 0 28 28"><path d="M14.00 2.80 L16.97 4.87 L20.58 4.94 L21.77 8.36 L24.65 10.54 L23.60 14.00 L24.65 17.46 L21.77 19.64 L20.58 23.06 L16.97 23.13 L14.00 25.20 L11.03 23.13 L7.42 23.06 L6.23 19.64 L3.35 17.46 L4.40 14.00 L3.35 10.54 L6.23 8.36 L7.42 4.94 L11.03 4.87Z" fill="#6e6e6e" stroke="#6e6e6e" stroke-width="1.4" stroke-linejoin="round"/><path d="M8.9 13.1L12.9 17.1L20.1 9.9" fill="none" stroke="#fff" stroke-width="2.9"/></svg>
<svg style="position:absolute;left:2114.5px;top:20.8px;width:20px;height:5.5px" viewBox="0 0 20 5.5" fill="#666"><circle cx="3" cy="2.75" r="2.45"/><circle cx="10.2" cy="2.75" r="2.45"/><circle cx="17.4" cy="2.75" r="2.45"/></svg>
</div>
<div class="row" style="left:0;top:443.100px;background:#ffffff">
<div class="a" style="left:0;top:0;width:95.5px;height:48.125px;background:#f7f7f7"></div>
<div class="a" style="left:2021px;top:0;width:164px;height:48.125px;background:#f7f7f7"></div>
<div class="dv"></div>
<div class="cb" style="left:17px;top:13px"></div>
<div class="cell lnk" style="left:110.5px;top:15px;letter-spacing:-0.076px">multi_document_test...</div>
<div class="cell" style="left:396px;top:15px">1</div>
<div class="badge" style="top:12px">Ready for validation</div>
<div class="cell" style="left:647.4px;top:15px;letter-spacing:-0.17px">20.08.2025 10:54:28</div>
<div class="cell" style="left:845px;top:15px">-</div>
<div class="cell" style="left:992px;top:15px">Invoice</div>
<div class="cell" style="left:1118.8px;top:15px;letter-spacing:-0.09px">Test Polydocs</div>
<div class="cell" style="left:1305.8px;top:15px">-</div>
<div class="cell" style="left:1486.3px;top:15px;letter-spacing:-0.17px">20.08.2025 10:54:46</div>
<div class="cell" style="left:1683.8px;top:15px">-</div>
<div class="cell" style="left:1861.8px;top:15px;letter-spacing:-0.09px">Test Polydocs</div>
<svg style="position:absolute;left:2078.1px;top:9.70px;width:28px;height:28px" viewBox="0 0 28 28"><path d="M14.00 2.80 L16.97 4.87 L20.58 4.94 L21.77 8.36 L24.65 10.54 L23.60 14.00 L24.65 17.46 L21.77 19.64 L20.58 23.06 L16.97 23.13 L14.00 25.20 L11.03 23.13 L7.42 23.06 L6.23 19.64 L3.35 17.46 L4.40 14.00 L3.35 10.54 L6.23 8.36 L7.42 4.94 L11.03 4.87Z" fill="#6e6e6e" stroke="#6e6e6e" stroke-width="1.4" stroke-linejoin="round"/><path d="M8.9 13.1L12.9 17.1L20.1 9.9" fill="none" stroke="#fff" stroke-width="2.9"/></svg>
<svg style="position:absolute;left:2114.5px;top:20.8px;width:20px;height:5.5px" viewBox="0 0 20 5.5" fill="#666"><circle cx="3" cy="2.75" r="2.45"/><circle cx="10.2" cy="2.75" r="2.45"/><circle cx="17.4" cy="2.75" r="2.45"/></svg>
</div>
<div class="row" style="left:0;top:491.225px;background:#f9fafc">
<div class="a" style="left:0;top:0;width:95.5px;height:48.125px;background:#f7f7f7"></div>
<div class="a" style="left:2021px;top:0;width:164px;height:48.125px;background:#f7f7f7"></div>
<div class="dv"></div>
<div class="cb" style="left:17px;top:13px"></div>
<div class="cell lnk" style="left:110.5px;top:15px;letter-spacing:0.264px">testfile.pdf</div>
<div class="cell" style="left:396px;top:15px">1</div>
<div class="badge" style="top:12px">Ready for validation</div>
<div class="cell" style="left:647.4px;top:15px;letter-spacing:-0.17px">20.08.2025 10:54:03</div>
<div class="cell" style="left:845px;top:15px">-</div>
<div class="cell" style="left:992px;top:15px">Invoice</div>
<div class="cell" style="left:1118.8px;top:15px;letter-spacing:-0.09px">Test Polydocs</div>
<div class="cell" style="left:1305.8px;top:15px">-</div>
<div class="cell" style="left:1486.3px;top:15px;letter-spacing:-0.17px">20.08.2025 10:54:21</div>
<div class="cell" style="left:1683.8px;top:15px">-</div>
<div class="cell" style="left:1861.8px;top:15px;letter-spacing:-0.09px">Test Polydocs</div>
<svg style="position:absolute;left:2078.1px;top:9.70px;width:28px;height:28px" viewBox="0 0 28 28"><path d="M14.00 2.80 L16.97 4.87 L20.58 4.94 L21.77 8.36 L24.65 10.54 L23.60 14.00 L24.65 17.46 L21.77 19.64 L20.58 23.06 L16.97 23.13 L14.00 25.20 L11.03 23.13 L7.42 23.06 L6.23 19.64 L3.35 17.46 L4.40 14.00 L3.35 10.54 L6.23 8.36 L7.42 4.94 L11.03 4.87Z" fill="#6e6e6e" stroke="#6e6e6e" stroke-width="1.4" stroke-linejoin="round"/><path d="M8.9 13.1L12.9 17.1L20.1 9.9" fill="none" stroke="#fff" stroke-width="2.9"/></svg>
<svg style="position:absolute;left:2114.5px;top:20.8px;width:20px;height:5.5px" viewBox="0 0 20 5.5" fill="#666"><circle cx="3" cy="2.75" r="2.45"/><circle cx="10.2" cy="2.75" r="2.45"/><circle cx="17.4" cy="2.75" r="2.45"/></svg>
</div>
<div class="row" style="left:0;top:539.350px;background:#ffffff">
<div class="a" style="left:0;top:0;width:95.5px;height:48.125px;background:#f7f7f7"></div>
<div class="a" style="left:2021px;top:0;width:164px;height:48.125px;background:#f7f7f7"></div>
<div class="dv"></div>
<div class="cb" style="left:17px;top:13px"></div>
<div class="cell lnk" style="left:110.5px;top:15px;letter-spacing:-0.086px">multi_document_with...</div>
<div class="cell" style="left:396px;top:15px">1</div>
<div class="badge" style="top:12px">Ready for validation</div>
<div class="cell" style="left:647.4px;top:15px;letter-spacing:-0.17px">20.08.2025 10:53:12</div>
<div class="cell" style="left:845px;top:15px">-</div>
<div class="cell" style="left:992px;top:15px">Invoice</div>
<div class="cell" style="left:1118.8px;top:15px;letter-spacing:-0.09px">Test Polydocs</div>
<div class="cell" style="left:1305.8px;top:15px">-</div>
<div class="cell" style="left:1486.3px;top:15px;letter-spacing:-0.17px">20.08.2025 10:53:24</div>
<div class="cell" style="left:1683.8px;top:15px">-</div>
<div class="cell" style="left:1861.8px;top:15px;letter-spacing:-0.09px">Test Polydocs</div>
<svg style="position:absolute;left:2078.1px;top:9.70px;width:28px;height:28px" viewBox="0 0 28 28"><path d="M14.00 2.80 L16.97 4.87 L20.58 4.94 L21.77 8.36 L24.65 10.54 L23.60 14.00 L24.65 17.46 L21.77 19.64 L20.58 23.06 L16.97 23.13 L14.00 25.20 L11.03 23.13 L7.42 23.06 L6.23 19.64 L3.35 17.46 L4.40 14.00 L3.35 10.54 L6.23 8.36 L7.42 4.94 L11.03 4.87Z" fill="#6e6e6e" stroke="#6e6e6e" stroke-width="1.4" stroke-linejoin="round"/><path d="M8.9 13.1L12.9 17.1L20.1 9.9" fill="none" stroke="#fff" stroke-width="2.9"/></svg>
<svg style="position:absolute;left:2114.5px;top:20.8px;width:20px;height:5.5px" viewBox="0 0 20 5.5" fill="#666"><circle cx="3" cy="2.75" r="2.45"/><circle cx="10.2" cy="2.75" r="2.45"/><circle cx="17.4" cy="2.75" r="2.45"/></svg>
</div>
<div class="row" style="left:0;top:587.475px;background:#f9fafc">
<div class="a" style="left:0;top:0;width:95.5px;height:48.125px;background:#f7f7f7"></div>
<div class="a" style="left:2021px;top:0;width:164px;height:48.125px;background:#f7f7f7"></div>
<div class="dv"></div>
<div class="cb" style="left:17px;top:13px"></div>
<div class="cell lnk" style="left:110.5px;top:15px;letter-spacing:-0.075px">corrupted_document...</div>
<div class="cell" style="left:396px;top:15px">1</div>
<div class="badge" style="top:12px">Ready for validation</div>
<div class="cell" style="left:647.4px;top:15px;letter-spacing:-0.17px">20.08.2025 10:52:53</div>
<div class="cell" style="left:845px;top:15px">-</div>
<div class="cell" style="left:992px;top:15px">Invoice</div>
<div class="cell" style="left:1118.8px;top:15px;letter-spacing:-0.09px">Test Polydocs</div>
<div class="cell" style="left:1305.8px;top:15px">-</div>
<div class="cell" style="left:1486.3px;top:15px;letter-spacing:-0.17px">20.08.2025 10:53:07</div>
<div class="cell" style="left:1683.8px;top:15px">-</div>
<div class="cell" style="left:1861.8px;top:15px;letter-spacing:-0.09px">Test Polydocs</div>
<svg style="position:absolute;left:2078.1px;top:9.70px;width:28px;height:28px" viewBox="0 0 28 28"><path d="M14.00 2.80 L16.97 4.87 L20.58 4.94 L21.77 8.36 L24.65 10.54 L23.60 14.00 L24.65 17.46 L21.77 19.64 L20.58 23.06 L16.97 23.13 L14.00 25.20 L11.03 23.13 L7.42 23.06 L6.23 19.64 L3.35 17.46 L4.40 14.00 L3.35 10.54 L6.23 8.36 L7.42 4.94 L11.03 4.87Z" fill="#6e6e6e" stroke="#6e6e6e" stroke-width="1.4" stroke-linejoin="round"/><path d="M8.9 13.1L12.9 17.1L20.1 9.9" fill="none" stroke="#fff" stroke-width="2.9"/></svg>
<svg style="position:absolute;left:2114.5px;top:20.8px;width:20px;height:5.5px" viewBox="0 0 20 5.5" fill="#666"><circle cx="3" cy="2.75" r="2.45"/><circle cx="10.2" cy="2.75" r="2.45"/><circle cx="17.4" cy="2.75" r="2.45"/></svg>
</div>
<div class="row" style="left:0;top:635.600px;background:#ffffff">
<div class="a" style="left:0;top:0;width:95.5px;height:48.125px;background:#f7f7f7"></div>
<div class="a" style="left:2021px;top:0;width:164px;height:48.125px;background:#f7f7f7"></div>
<div class="dv"></div>
<div class="cb" style="left:17px;top:13px"></div>
<div class="cell lnk" style="left:110.5px;top:15px;letter-spacing:-0.226px">handle_corrupted_file...</div>
<div class="cell" style="left:396px;top:15px">1</div>
<div class="badge" style="top:12px">Ready for validation</div>
<div class="cell" style="left:647.4px;top:15px;letter-spacing:-0.17px">20.08.2025 10:52:37</div>
<div class="cell" style="left:845px;top:15px">-</div>
<div class="cell" style="left:992px;top:15px">Invoice</div>
<div class="cell" style="left:1118.8px;top:15px;letter-spacing:-0.09px">Test Polydocs</div>
<div class="cell" style="left:1305.8px;top:15px">-</div>
<div class="cell" style="left:1486.3px;top:15px;letter-spacing:-0.17px">20.08.2025 10:52:50</div>
<div class="cell" style="left:1683.8px;top:15px">-</div>
<div class="cell" style="left:1861.8px;top:15px;letter-spacing:-0.09px">Test Polydocs</div>
<svg style="position:absolute;left:2078.1px;top:9.70px;width:28px;height:28px" viewBox="0 0 28 28"><path d="M14.00 2.80 L16.97 4.87 L20.58 4.94 L21.77 8.36 L24.65 10.54 L23.60 14.00 L24.65 17.46 L21.77 19.64 L20.58 23.06 L16.97 23.13 L14.00 25.20 L11.03 23.13 L7.42 23.06 L6.23 19.64 L3.35 17.46 L4.40 14.00 L3.35 10.54 L6.23 8.36 L7.42 4.94 L11.03 4.87Z" fill="#6e6e6e" stroke="#6e6e6e" stroke-width="1.4" stroke-linejoin="round"/><path d="M8.9 13.1L12.9 17.1L20.1 9.9" fill="none" stroke="#fff" stroke-width="2.9"/></svg>
<svg style="position:absolute;left:2114.5px;top:20.8px;width:20px;height:5.5px" viewBox="0 0 20 5.5" fill="#666"><circle cx="3" cy="2.75" r="2.45"/><circle cx="10.2" cy="2.75" r="2.45"/><circle cx="17.4" cy="2.75" r="2.45"/></svg>
</div>
<div class="row" style="left:0;top:683.725px;background:#f9fafc">
<div class="a" style="left:0;top:0;width:95.5px;height:48.125px;background:#f7f7f7"></div>
<div class="a" style="left:2021px;top:0;width:164px;height:48.125px;background:#f7f7f7"></div>
<div class="dv"></div>
<div class="cb" style="left:17px;top:13px"></div>
<div class="cell lnk" style="left:110.5px;top:15px;letter-spacing:-0.267px">move_email_after_im...</div>
<div class="cell" style="left:396px;top:15px">1</div>
<div class="badge" style="top:12px">Ready for validation</div>
<div class="cell" style="left:647.4px;top:15px;letter-spacing:-0.17px">20.08.2025 10:52:15</div>
<div class="cell" style="left:845px;top:15px">-</div>
<div class="cell" style="left:992px;top:15px">Invoice</div>
<div class="cell" style="left:1118.8px;top:15px;letter-spacing:-0.09px">Test Polydocs</div>
<div class="cell" style="left:1305.8px;top:15px">-</div>
<div class="cell" style="left:1486.3px;top:15px;letter-spacing:-0.17px">20.08.2025 10:52:29</div>
<div class="cell" style="left:1683.8px;top:15px">-</div>
<div class="cell" style="left:1861.8px;top:15px;letter-spacing:-0.09px">Test Polydocs</div>
<svg style="position:absolute;left:2078.1px;top:9.70px;width:28px;height:28px" viewBox="0 0 28 28"><path d="M14.00 2.80 L16.97 4.87 L20.58 4.94 L21.77 8.36 L24.65 10.54 L23.60 14.00 L24.65 17.46 L21.77 19.64 L20.58 23.06 L16.97 23.13 L14.00 25.20 L11.03 23.13 L7.42 23.06 L6.23 19.64 L3.35 17.46 L4.40 14.00 L3.35 10.54 L6.23 8.36 L7.42 4.94 L11.03 4.87Z" fill="#6e6e6e" stroke="#6e6e6e" stroke-width="1.4" stroke-linejoin="round"/><path d="M8.9 13.1L12.9 17.1L20.1 9.9" fill="none" stroke="#fff" stroke-width="2.9"/></svg>
<svg style="position:absolute;left:2114.5px;top:20.8px;width:20px;height:5.5px" viewBox="0 0 20 5.5" fill="#666"><circle cx="3" cy="2.75" r="2.45"/><circle cx="10.2" cy="2.75" r="2.45"/><circle cx="17.4" cy="2.75" r="2.45"/></svg>
</div>
<div class="row" style="left:0;top:731.850px;background:#ffffff">
<div class="a" style="left:0;top:0;width:95.5px;height:48.125px;background:#f7f7f7"></div>
<div class="a" style="left:2021px;top:0;width:164px;height:48.125px;background:#f7f7f7"></div>
<div class="dv"></div>
<div class="cb" style="left:17px;top:13px"></div>
<div class="cell lnk" style="left:110.5px;top:15px;letter-spacing:-0.226px">test_google_client_20...</div>
<div class="cell" style="left:396px;top:15px">1</div>
<div class="badge" style="top:12px">Ready for validation</div>
<div class="cell" style="left:647.4px;top:15px;letter-spacing:-0.17px">20.08.2025 10:52:13</div>
<div class="cell" style="left:845px;top:15px">-</div>
<div class="cell" style="left:992px;top:15px">Invoice</div>
<div class="cell" style="left:1118.8px;top:15px;letter-spacing:-0.09px">Test Polydocs</div>
<div class="cell" style="left:1305.8px;top:15px">-</div>
<div class="cell" style="left:1486.3px;top:15px;letter-spacing:-0.17px">20.08.2025 10:52:29</div>
<div class="cell" style="left:1683.8px;top:15px">-</div>
<div class="cell" style="left:1861.8px;top:15px;letter-spacing:-0.09px">Test Polydocs</div>
<svg style="position:absolute;left:2078.1px;top:9.70px;width:28px;height:28px" viewBox="0 0 28 28"><path d="M14.00 2.80 L16.97 4.87 L20.58 4.94 L21.77 8.36 L24.65 10.54 L23.60 14.00 L24.65 17.46 L21.77 19.64 L20.58 23.06 L16.97 23.13 L14.00 25.20 L11.03 23.13 L7.42 23.06 L6.23 19.64 L3.35 17.46 L4.40 14.00 L3.35 10.54 L6.23 8.36 L7.42 4.94 L11.03 4.87Z" fill="#6e6e6e" stroke="#6e6e6e" stroke-width="1.4" stroke-linejoin="round"/><path d="M8.9 13.1L12.9 17.1L20.1 9.9" fill="none" stroke="#fff" stroke-width="2.9"/></svg>
<svg style="position:absolute;left:2114.5px;top:20.8px;width:20px;height:5.5px" viewBox="0 0 20 5.5" fill="#666"><circle cx="3" cy="2.75" r="2.45"/><circle cx="10.2" cy="2.75" r="2.45"/><circle cx="17.4" cy="2.75" r="2.45"/></svg>
</div>
<div class="row" style="left:0;top:779.975px;background:#f9fafc">
<div class="a" style="left:0;top:0;width:95.5px;height:48.125px;background:#f7f7f7"></div>
<div class="a" style="left:2021px;top:0;width:164px;height:48.125px;background:#f7f7f7"></div>
<div class="dv"></div>
<div class="cb" style="left:17px;top:13px"></div>
<div class="cell lnk" style="left:110.5px;top:15px;letter-spacing:0.039px">test_microsoft_client...</div>
<div class="cell" style="left:396px;top:15px">1</div>
<div class="badge" style="top:12px">Ready for validation</div>
<div class="cell" style="left:647.4px;top:15px;letter-spacing:-0.17px">20.08.2025 10:51:53</div>
<div class="cell" style="left:845px;top:15px">-</div>
<div class="cell" style="left:992px;top:15px">Invoice</div>
<div class="cell" style="left:1118.8px;top:15px;letter-spacing:-0.09px">Test Polydocs</div>
<div class="cell" style="left:1305.8px;top:15px">-</div>
<div class="cell" style="left:1486.3px;top:15px;letter-spacing:-0.17px">20.08.2025 10:52:11</div>
<div class="cell" style="left:1683.8px;top:15px">-</div>
<div class="cell" style="left:1861.8px;top:15px;letter-spacing:-0.09px">Test Polydocs</div>
<svg style="position:absolute;left:2078.1px;top:9.70px;width:28px;height:28px" viewBox="0 0 28 28"><path d="M14.00 2.80 L16.97 4.87 L20.58 4.94 L21.77 8.36 L24.65 10.54 L23.60 14.00 L24.65 17.46 L21.77 19.64 L20.58 23.06 L16.97 23.13 L14.00 25.20 L11.03 23.13 L7.42 23.06 L6.23 19.64 L3.35 17.46 L4.40 14.00 L3.35 10.54 L6.23 8.36 L7.42 4.94 L11.03 4.87Z" fill="#6e6e6e" stroke="#6e6e6e" stroke-width="1.4" stroke-linejoin="round"/><path d="M8.9 13.1L12.9 17.1L20.1 9.9" fill="none" stroke="#fff" stroke-width="2.9"/></svg>
<svg style="position:absolute;left:2114.5px;top:20.8px;width:20px;height:5.5px" viewBox="0 0 20 5.5" fill="#666"><circle cx="3" cy="2.75" r="2.45"/><circle cx="10.2" cy="2.75" r="2.45"/><circle cx="17.4" cy="2.75" r="2.45"/></svg>
</div>
</div>
<div class="a" style="left:95px;top:1055.5px;width:2185px;height:57.5px;background:#fff"></div>
<div class="a" style="left:2039.5px;top:1055.5px;width:1.2px;height:57.5px;background:#e2e2e2"></div>
<div class="t" style="left:1795px;top:1076px;font-size:17px;color:#6a6a6a;letter-spacing:-0.3px">Documents per Page:</div>
<div class="t" style="left:1965px;top:1076px;font-size:17px;color:#222">50</div>
<svg style="position:absolute;left:2000px;top:1082px;width:12px;height:6px" viewBox="0 0 12 6" fill="#6a6a6a" ><path d="M0 0h12L6 6z"/></svg>
<svg style="position:absolute;left:2068.5px;top:1076.5px;width:17px;height:16px" viewBox="0 0 17 16" fill="none" ><rect x="0.8" y="0.5" width="2.6" height="15" fill="#5ba6c4"/><path fill="none" stroke="#5ba6c4" stroke-width="2.4" d="M15.6 1.2L9 8l6.6 6.8"/></svg>
<svg style="position:absolute;left:2107.5px;top:1076.5px;width:11px;height:16px" viewBox="0 0 11 16" fill="none" ><path fill="none" stroke="#5ba6c4" stroke-width="2.4" d="M9.6 1.2L3 8l6.6 6.8"/></svg>
<div class="t" style="left:2143px;top:1077px;font-size:16.5px;color:#5f5f5f;letter-spacing:0.2px">1 / 5</div>
<svg style="position:absolute;left:2202.5px;top:1076.5px;width:11px;height:16px" viewBox="0 0 11 16" fill="none" ><path fill="none" stroke="#1f7fa6" stroke-width="2.4" d="M1.4 1.2L8 8l-6.6 6.8"/></svg>
<svg style="position:absolute;left:2235.5px;top:1076.5px;width:17px;height:16px" viewBox="0 0 17 16" fill="none" ><rect x="13.6" y="0.5" width="2.6" height="15" fill="#1f7fa6"/><path fill="none" stroke="#1f7fa6" stroke-width="2.4" d="M1.4 1.2L8 8l-6.6 6.8"/></svg>
<div class="a" style="left:104.5px;top:1138.5px;width:2166px;height:1.5px;background:#dcdcdc"></div>
<svg style="position:absolute;left:0;top:0;width:2304px;height:1159px" viewBox="0 0 2304 1159"><polygon fill="#00ffff" points="1897.3,184 1881.8,230.9 1869.2,219.5 1830,259 1822.6,252.8 1862.1,212.2 1850.2,199.5"/></svg>
</body></html>
